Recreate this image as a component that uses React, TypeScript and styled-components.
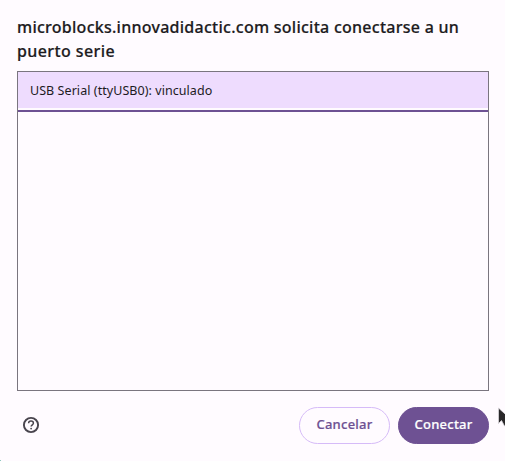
import React from "react";
import styled, { createGlobalStyle } from "styled-components";

const GlobalStyle = createGlobalStyle`
  * { box-sizing: border-box; }
  body {
    margin: 0;
    background: #fffbff;
    font-family: "Noto Sans", "Open Sans", sans-serif;
    overflow: hidden;
  }
`;

const Dialog = styled.main`
  position: relative;
  display: flex;
  flex-direction: column;
  width: 505px;
  height: 461px;
  padding: 15px 16px 17px 17px;
  background: #fffbff;
`;

const Title = styled.h1`
  margin: 0 0 8px;
  height: 48px;
  font-size: 16px;
  line-height: 24px;
  font-weight: 500;
  color: #1d1b1e;
  -webkit-text-stroke: 0.2px #1d1b1e;
  white-space: nowrap;
`;

const TitleLine = styled.span<{ $spacing: number }>`
  display: block;
  letter-spacing: ${(p) => p.$spacing}px;
`;

const PortList = styled.ul`
  margin: 0;
  padding: 0;
  width: 472px;
  height: 320px;
  list-style: none;
  border: 1px solid #7a757f;
`;

const PortRow = styled.li`
  display: flex;
  align-items: center;
  height: 40px;
  padding: 0 12px 2px;
  border-bottom: 2px solid #6e5193;
  background: linear-gradient(#eedcfe 36px, #fffbff 36px);
  color: #1d1b1e;
  font-size: 12.5px;
  letter-spacing: 0.06px;
`;

const Footer = styled.footer`
  display: flex;
  align-items: center;
  gap: 8px;
  width: 472px;
  margin-top: 16px;
`;

const HelpButton = styled.button`
  display: flex;
  margin: 0 auto 0 5px;
  padding: 0 0 1px;
  border: 0;
  background: none;
  color: #49454e;
`;

const Button = styled.button<{ $primary?: boolean }>`
  width: 91px;
  height: 37px;
  padding: 0 0 3px;
  border-radius: 19px;
  border: 1px solid ${(p) => (p.$primary ? "#6e5193" : "#d6bbf8")};
  background: ${(p) => (p.$primary ? "#6e5193" : "transparent")};
  color: ${(p) => (p.$primary ? "#ffffff" : "#6e5193")};
  font: 500 13px "Noto Sans", "Open Sans", sans-serif;
  letter-spacing: 0.25px;
  -webkit-text-stroke: 0.2px currentColor;
`;

const Pointer = styled.svg`
  position: absolute;
  left: 497px;
  top: 405px;
`;

const Corner = styled.i`
  position: absolute;
  left: 0;
  bottom: 0;
  width: 1px;
  height: 1px;
  background: #8fc9bd;
`;

export default function App() {
  return (
    <>
      <GlobalStyle />
      <Dialog>
        <Title>
          <TitleLine $spacing={0.26}>
            microblocks.innovadidactic.com solicita conectarse a un
          </TitleLine>
          <TitleLine $spacing={0.4}>puerto serie</TitleLine>
        </Title>
        <PortList>
          <PortRow>USB Serial (ttyUSB0): vinculado</PortRow>
        </PortList>
        <Footer>
          <HelpButton aria-label="Ayuda">
            <svg width="18" height="18" viewBox="0 0 18 18" fill="none" stroke="currentColor">
              <circle cx="9" cy="9" r="7.1" strokeWidth="1.9" />
              <path d="M6.6 7.3C6.6 5.9 7.6 5.1 9 5.1s2.4.8 2.4 2.1c0 1.5-2.3 1.8-2.3 3.4" strokeWidth="1.5" />
              <circle cx="9.1" cy="12.6" r="0.9" fill="currentColor" stroke="none" />
            </svg>
          </HelpButton>
          <Button>Cancelar</Button>
          <Button $primary>Conectar</Button>
        </Footer>
        <Pointer width="8" height="24" viewBox="0 0 8 24">
          <path
            d="M1.5 3v15.5l3-3 3 5.5h4L9.5 13h3z"
            fill="#29282a"
            stroke="#d9d5da"
            strokeWidth="0.8"
          />
        </Pointer>
        <Corner />
      </Dialog>
    </>
  );
}
